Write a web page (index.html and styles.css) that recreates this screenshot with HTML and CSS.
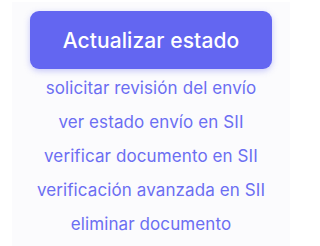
FILE: index.html
```html
<!DOCTYPE html>
<html lang="es">
<head>
<meta charset="utf-8">
<link rel="stylesheet" href="styles.css">
</head>
<body>
<div class="panel">
  <button class="btn">Actualizar estado</button>
  <ul class="links">
    <li><a href="#">solicitar revisión del envío</a></li>
    <li><a href="#">ver estado envío en SII</a></li>
    <li><a href="#">verificar documento en SII</a></li>
    <li><a href="#">verificación avanzada en SII</a></li>
    <li><a href="#">eliminar documento</a></li>
  </ul>
</div>
</body>
</html>
```
FILE: styles.css
```css
html, body {
  margin: 0;
  padding: 0;
  background: #ffffff;
  width: 300px;
  height: 246px;
  overflow: hidden;
}
body {
  font-family: Inter, "Noto Sans", sans-serif;
}
.panel {
  margin: 2px 10px 0 12px;
  background: #fbfbfd;
  height: 244px;
  display: flex;
  flex-direction: column;
  align-items: center;
  padding-top: 9px;
  box-sizing: border-box;
}
.btn {
  width: 242px;
  height: 58px;
  border: none;
  border-radius: 9px;
  background: #6366f1;
  color: #ffffff;
  font-family: Inter, "Noto Sans", sans-serif;
  font-size: 21px;
  font-weight: 500;
  letter-spacing: 0.1px;
  box-shadow: 0 2px 6px rgba(99, 102, 241, 0.35);
  padding: 0;
}
.links {
  list-style: none;
  margin: 2px 0 0 0;
  padding: 0;
  width: 100%;
  text-align: center;
}
.links li {
  height: 34px;
  line-height: 34px;
}
.links a {
  color: #6b6ef2;
  text-decoration: none;
  font-size: 17px;
  letter-spacing: 0.1px;
}
```
